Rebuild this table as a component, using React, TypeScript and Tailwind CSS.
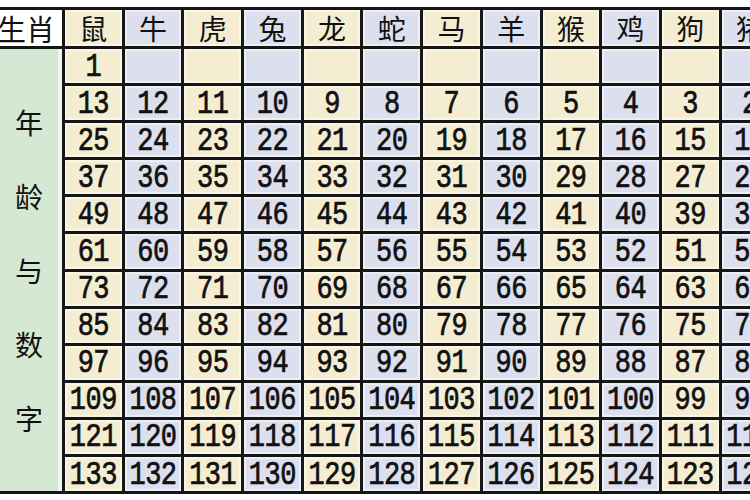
import React from "react";

const animals = ["鼠", "牛", "虎", "兔", "龙", "蛇", "马", "羊", "猴", "鸡", "狗", "猪"];
const side = ["年", "龄", "与", "数", "字"];

const cjk = { fontFamily: '"Noto Sans CJK SC", "Noto Sans", sans-serif' };
const mono = { fontFamily: '"Liberation Mono", "Courier New", monospace' };

function cellClass(c: number) {
  return c % 2 === 0
    ? "bg-[#f4edd2] border-2 border-[#faf6e6]"
    : "bg-[#dcdfee] border-2 border-[#eceef6]";
}

export default function App() {
  const rows = Array.from({ length: 12 }, (_, r) => r);
  return (
    <div className="w-[750px] h-[500px] overflow-hidden bg-white pt-[7px]">
      <div className="ml-[-3px] w-[800px] grid grid-cols-[62px_repeat(12,56.7px)] grid-rows-[36px_repeat(12,34.1px)] gap-[3px] bg-[#161616] p-[3px]">
        <div
          className="bg-white flex items-center justify-end pr-[7px] overflow-hidden text-[29px] leading-none text-[#111]"
          style={cjk}
        >
          <span className="whitespace-nowrap">生肖</span>
        </div>
        {animals.map((a, c) => (
          <div
            key={a}
            className={`${cellClass(c)} flex items-center justify-center text-[28px] leading-none text-[#111]`}
            style={cjk}
          >
            {a}
          </div>
        ))}
        <div
          className="row-span-12 col-start-1 row-start-2 bg-[#d4e8d3] border-r-[4px] border-[#eef5ec] flex flex-col items-center justify-center text-[28px] text-[#111]"
          style={cjk}
        >
          {side.map((s) => (
            <div key={s} className="h-[74px] leading-[74px]">
              {s}
            </div>
          ))}
        </div>
        {rows.map((r) =>
          animals.map((_, c) => {
            const v = 12 * r + 1 - c;
            return (
              <div
                key={`${r}-${c}`}
                className={`${cellClass(c)} flex items-center justify-center`}
              >
                <span
                  className="block text-[27px] leading-none text-[#111] scale-y-[1.2] translate-y-[2px] tracking-[-0.5px] [-webkit-text-stroke:0.6px_#111]"
                  style={mono}
                >
                  {v > 0 ? v : ""}
                </span>
              </div>
            );
          })
        )}
      </div>
    </div>
  );
}
